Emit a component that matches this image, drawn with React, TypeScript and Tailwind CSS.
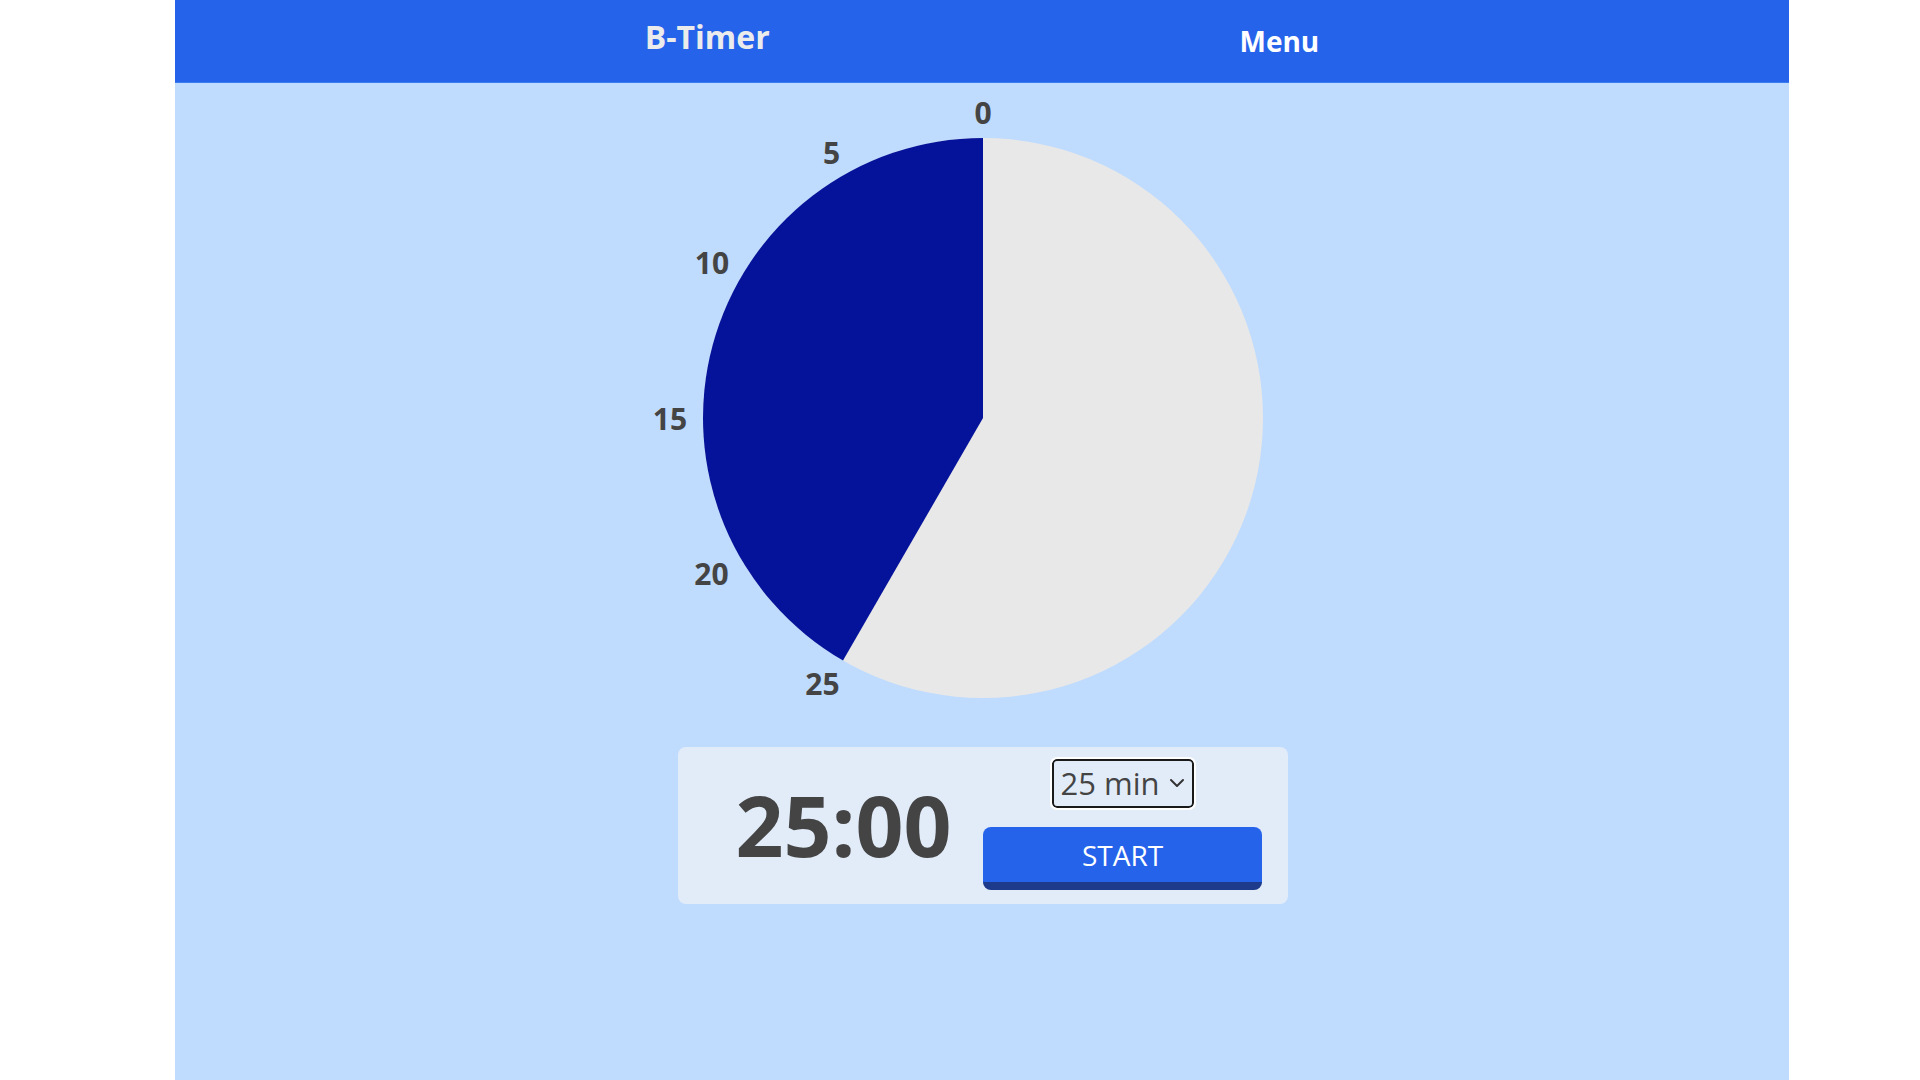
import { useState } from 'react';

const CX = 351;
const CY = 333;
const R = 280;

// minute labels around the dial, measured positions (svg coords, baseline)
const labels = [
  { text: '0', x: 351, y: 39 },
  { text: '5', x: 199.5, y: 79 },
  { text: '10', x: 80, y: 189 },
  { text: '15', x: 38, y: 345 },
  { text: '20', x: 79.5, y: 500 },
  { text: '25', x: 190.5, y: 610 },
];

function wedgePath(minutes: number) {
  const angle = (minutes / 60) * Math.PI * 2;
  const x = CX - R * Math.sin(angle);
  const y = CY - R * Math.cos(angle);
  const large = minutes > 30 ? 1 : 0;
  return `M${CX} ${CY} L${CX} ${CY - R} A${R} ${R} 0 ${large} 0 ${x.toFixed(2)} ${y.toFixed(2)} Z`;
}

function Dial({ minutes }: { minutes: number }) {
  return (
    <svg width="700" height="630" viewBox="0 0 700 630" className="block overflow-visible">
      <circle cx={CX} cy={CY} r={R} fill="#e8e8e8" />
      <path d={wedgePath(minutes)} fill="#05139a" />
      {labels.map((l) => (
        <text
          key={l.text}
          x={l.x}
          y={l.y}
          textAnchor="middle"
          fontSize="30"
          fontWeight="700"
          fill="#444444"
          fontFamily="'Open Sans', sans-serif"
        >
          {l.text}
        </text>
      ))}
    </svg>
  );
}

export default function App() {
  const [minutes, setMinutes] = useState(25);

  return (
    <div className="min-h-screen bg-white font-['Open_Sans',sans-serif]">
      <div className="ml-[175px] min-h-screen w-[1614px] bg-[#bfdbfe]">
        <header className="flex h-[83px] items-center justify-evenly border-b border-[#3d7cf0] bg-[#2563eb]">
          <h1 className="mb-2 text-[32px] font-bold text-[#ebebeb]">B-Timer</h1>
          <span className="text-[28px] font-bold text-white">Menu</span>
        </header>

        <main className="flex flex-col items-center pt-[2px]">
          <Dial minutes={minutes} />

          <div className="mt-[32px] ml-[2px] grid w-[610px] grid-cols-2 rounded-lg bg-[#e2ecf9] px-[26px] pt-[12px] pb-[14px]">
            <div className="flex items-center justify-center">
              <span className="text-[84px] leading-none font-bold text-[#444444]">
                {String(minutes).padStart(2, '0')}:00
              </span>
            </div>

            <div className="flex flex-col items-center gap-[19px]">
              <div className="relative">
                <select
                  value={minutes}
                  onChange={(e) => setMinutes(Number(e.target.value))}
                  className="h-[49px] w-[142px] appearance-none rounded-[5px] border-2 border-[#1a1a1a] bg-transparent pl-[7px] text-[31px] leading-none text-[#444444] outline-2 outline-white"
                >
                  <option value={5}>5 min</option>
                  <option value={10}>10 min</option>
                  <option value={15}>15 min</option>
                  <option value={20}>20 min</option>
                  <option value={25}>25 min</option>
                  <option value={30}>30 min</option>
                </select>
                <svg
                  className="pointer-events-none absolute top-[19px] right-[9px]"
                  width="16"
                  height="10"
                  viewBox="0 0 16 10"
                  fill="none"
                >
                  <path d="M2 2l6 6 6-6" stroke="#333" strokeWidth="2" strokeLinecap="round" strokeLinejoin="round" />
                </svg>
              </div>

              <button className="h-[63px] w-[279px] rounded-lg border-b-[8px] border-[#1e3a8a] bg-[#2563eb] text-[28px] text-white">
                START
              </button>
            </div>
          </div>
        </main>
      </div>
    </div>
  );
}
